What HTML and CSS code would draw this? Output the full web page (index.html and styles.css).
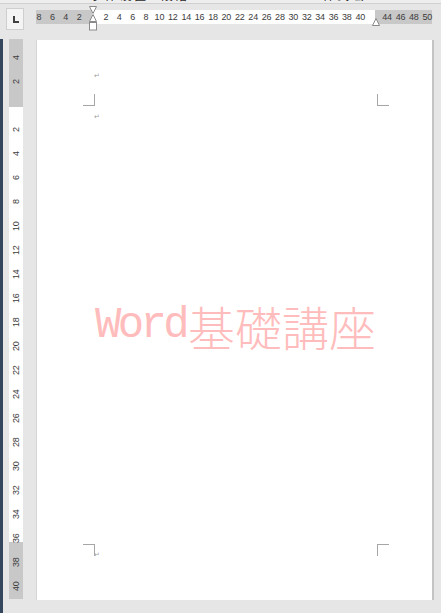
FILE: index.html
```html
<!DOCTYPE html>
<html lang="ja">
<head>
<meta charset="utf-8">
<title>Word</title>
<link rel="stylesheet" href="styles.css">
</head>
<body>
<div class="app">
  <div class="topstrip">
    <span class="frag frag-a">字 体 设 置 　段 落</span>
    <span class="frag frag-b">样 式 编</span>
  </div>
  <div class="hrow">
    <div class="tabbox"><span class="tabicon"></span></div>
    <div class="hruler">
      <div class="hlabels">
        <span>8</span><span>6</span><span>4</span><span>2</span><span></span>
        <span>2</span><span>4</span><span>6</span><span>8</span><span>10</span>
        <span>12</span><span>14</span><span>16</span><span>18</span><span>20</span>
        <span>22</span><span>24</span><span>26</span><span>28</span><span>30</span>
        <span>32</span><span>34</span><span>36</span><span>38</span><span>40</span>
        <span></span><span>44</span><span>46</span><span>48</span><span>50</span>
      </div>
      <svg class="indent-left" width="10" height="25" viewBox="0 0 10 25">
        <path d="M1.5 0.5 H8.5 L5 7.5 Z" fill="#fff" stroke="#8a8a8a"/>
        <path d="M5 8.5 L8.5 15.5 H1.5 Z" fill="#fff" stroke="#8a8a8a"/>
        <rect x="1.5" y="16.5" width="7" height="7.5" fill="#fff" stroke="#8a8a8a"/>
      </svg>
      <svg class="indent-right" width="10" height="8" viewBox="0 0 10 8">
        <path d="M5 0.5 L8.5 7.5 H1.5 Z" fill="#fff" stroke="#8a8a8a"/>
      </svg>
    </div>
  </div>
  <div class="main">
    <div class="edge"></div>
    <div class="vruler">
      <span class="vl">4</span><span class="vl">2</span><span class="vl"></span>
      <span class="vl">2</span><span class="vl">4</span><span class="vl">6</span><span class="vl">8</span>
      <span class="vl">10</span><span class="vl">12</span><span class="vl">14</span><span class="vl">16</span>
      <span class="vl">18</span><span class="vl">20</span><span class="vl">22</span><span class="vl">24</span>
      <span class="vl">26</span><span class="vl">28</span><span class="vl">30</span><span class="vl">32</span>
      <span class="vl">34</span><span class="vl">36</span><span class="vl">38</span><span class="vl">40</span>
    </div>
    <div class="page">
      <div class="header"><span class="pmark">↵</span></div>
      <div class="body">
        <span class="crop tl"></span><span class="crop tr"></span>
        <span class="crop bl"></span><span class="crop br"></span>
        <span class="pmark">↵</span>
        <div class="watermark"><span class="wm-latin">Word</span><span class="wm-cjk">基礎講座</span></div>
      </div>
      <div class="footer"><span class="pmark">↵</span></div>
    </div>
  </div>
</div>
</body>
</html>
```
FILE: styles.css
```css
html, body {
  margin: 0;
  padding: 0;
  background: #e6e6e6;
}
.app {
  width: 441px;
  height: 613px;
  overflow: hidden;
  background: #e6e6e6;
  font-family: "Liberation Sans", Arial, sans-serif;
}
.topstrip {
  height: 3px;
  border-bottom: 1px solid #d0d0d0;
  background: #eeeeee;
  overflow: hidden;
  display: flex;
  align-items: flex-start;
}
.frag {
  font-family: "Noto Sans CJK SC", sans-serif;
  font-size: 12px;
  line-height: 12px;
  color: #2a2a2a;
  margin-top: -11px;
  white-space: nowrap;
}
.frag-a { margin-left: 90px; }
.frag-b { margin-left: 135px; }
.hrow {
  height: 35px;
  display: flex;
  align-items: flex-start;
}
.tabbox {
  margin: 4px 0 0 6px;
  width: 18px;
  height: 22px;
  box-sizing: border-box;
  border: 1px solid #cfcfcf;
  background: #f4f4f4;
  position: relative;
}
.tabicon {
  position: absolute;
  left: 6px;
  top: 7px;
  width: 4px;
  height: 5px;
  border-left: 2px solid #404040;
  border-bottom: 2px solid #404040;
}
.hruler {
  position: relative;
  margin: 6px 0 0 12px;
  width: 396px;
  height: 14px;
  background: linear-gradient(to right, #c8c8c8 56.5px, #ffffff 56.5px, #ffffff 339px, #c8c8c8 339px);
}
.hlabels {
  display: flex;
  margin-left: -3.8px;
  height: 14px;
}
.hlabels span {
  flex: 0 0 13.4px;
  width: 13.4px;
  text-align: center;
  font-size: 9px;
  line-height: 14px;
  color: #3c3c3c;
  letter-spacing: -0.2px;
  white-space: nowrap;
  display: flex;
  justify-content: center;
}
.indent-left {
  position: absolute;
  left: 52px;
  top: -4px;
  display: block;
}
.indent-right {
  position: absolute;
  left: 335px;
  top: 8px;
  display: block;
}
.main {
  display: flex;
  align-items: flex-start;
  height: 574px;
}
.edge {
  width: 3px;
  height: 574px;
  background: #35475d;
}
.vruler {
  margin-left: 6px;
  width: 14px;
  height: 560px;
  box-sizing: border-box;
  padding-top: 7px;
  display: flex;
  flex-direction: column;
  background: linear-gradient(to bottom, #c8c8c8 68px, #ffffff 68px, #ffffff 503px, #c8c8c8 503px);
}
.vl {
  flex: 0 0 24px;
  height: 24px;
  display: flex;
  align-items: center;
  justify-content: center;
  writing-mode: vertical-rl;
  transform: rotate(180deg);
  font-size: 9px;
  line-height: 14px;
  color: #3c3c3c;
  letter-spacing: -0.2px;
}
.page {
  margin: 1px 0 0 14px;
  width: 395px;
  height: 560px;
  background: #ffffff;
  box-shadow: -1px 0 0 #d6d6d6, 2px 0 0 #c4c4c4;
  box-sizing: border-box;
  padding: 0 55px 0 57px;
  display: flex;
  flex-direction: column;
}
.header {
  height: 66px;
  box-sizing: border-box;
  padding-top: 31px;
}
.footer {
  height: 56px;
  box-sizing: border-box;
  padding-top: 6px;
}
.pmark {
  display: block;
  font-family: "DejaVu Sans", sans-serif;
  font-size: 7px;
  line-height: 10px;
  color: #a0a0a0;
}
.body {
  flex: 1;
  position: relative;
  padding-top: 6px;
}
.crop {
  position: absolute;
  width: 12px;
  height: 12px;
  box-sizing: border-box;
  border: 0 solid #a6a6a6;
}
.crop.tl { right: 100%; bottom: 100%; border-right-width: 1px; border-bottom-width: 1px; margin-right: -1px; }
.crop.tr { left: 100%; bottom: 100%; border-left-width: 1px; border-bottom-width: 1px; }
.crop.bl { right: 100%; top: 100%; border-right-width: 1px; border-top-width: 1px; margin-right: -1px; }
.crop.br { left: 100%; top: 100%; border-left-width: 1px; border-top-width: 1px; }
.watermark {
  position: absolute;
  left: 0;
  right: 0;
  top: 0;
  bottom: 0;
  display: flex;
  align-items: center;
  justify-content: center;
  color: #ffbcbc;
  white-space: nowrap;
  pointer-events: none;
}
.wm-latin {
  font-family: "Liberation Mono", monospace;
  font-size: 44px;
  letter-spacing: -3.6px;
  margin-right: 2px;
}
.wm-cjk {
  font-family: "Noto Sans CJK JP", sans-serif;
  font-size: 47px;
  font-weight: 300;
}
```
